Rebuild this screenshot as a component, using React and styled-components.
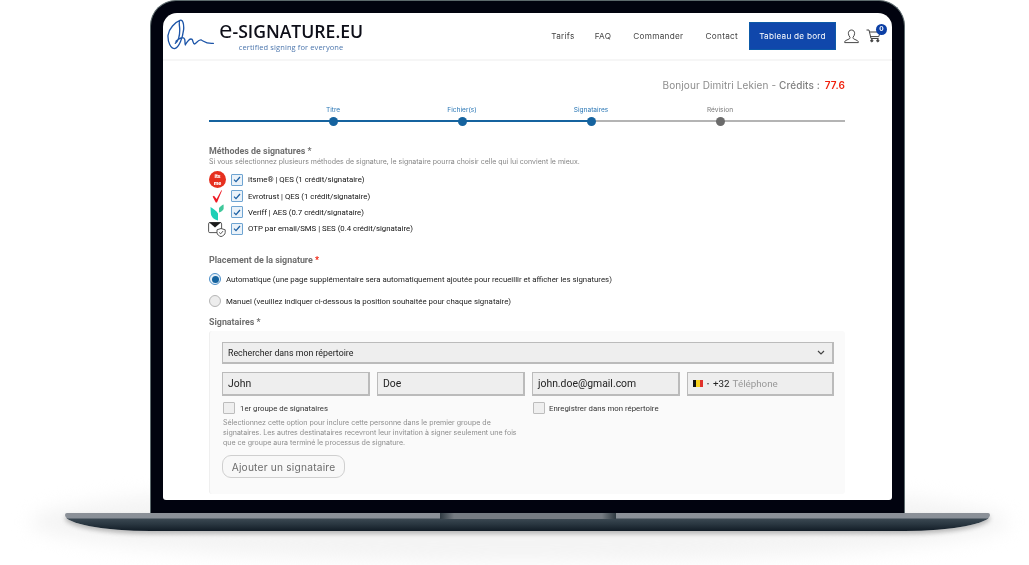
import React from 'react';
import styled, { createGlobalStyle } from 'styled-components';

const GlobalStyle = createGlobalStyle`
  html, body {
    margin: 0;
    padding: 0;
    background: #fff;
    overflow: hidden;
  }
  * {
    box-sizing: border-box;
  }
`;

const UI_FONT = `Inter, "Open Sans", sans-serif`;
const FORM_FONT = `Roboto, "Liberation Sans", sans-serif`;

const Page = styled.div`
  position: relative;
  width: 1029px;
  height: 565px;
  padding-left: 65px;
  overflow: hidden;
  background: #fff;

  &::before {
    content: '';
    position: absolute;
    left: 30px;
    right: 20px;
    top: 482px;
    height: 80px;
    border-radius: 50%;
    background: #f4f4f4;
    filter: blur(9px);
  }
`;

const Laptop = styled.div`
  position: relative;
  display: flex;
  flex-direction: column;
  align-items: center;
  width: 925px;
`;

const Lid = styled.div`
  width: 755px;
  height: 513px;
  padding: 12px 12px 13px;
  background: #01030f;
  border: 1px solid #5d6a6d;
  border-bottom: 0;
  border-radius: 26px 26px 0 0;
`;

const Screen = styled.div`
  display: flex;
  flex-direction: column;
  height: 100%;
  overflow: hidden;
  background: #fff;
  border-radius: 14px 14px 3px 3px;
  filter: blur(0.25px);
`;

const Base = styled.div`
  display: flex;
  justify-content: center;
  width: 925px;
  height: 18px;
  background: linear-gradient(to bottom, #8c9198 0, #8a9098 5px, #3a4751 6px, #2a3741 11px, #121c26 18px);
  border-radius: 2px 2px 90px 90px / 2px 2px 17px 17px;
  box-shadow: 0 3px 4px rgba(60, 60, 60, 0.32);
`;

const Notch = styled.div`
  width: 176px;
  height: 6px;
  background: linear-gradient(to right, #2f3a42, #757b82 8%, #757b82 92%, #2f3a42);
`;

const Header = styled.header`
  display: flex;
  align-items: center;
  justify-content: space-between;
  flex: none;
  height: 48px;
  padding: 0 11px 0 3px;
  border-bottom: 2px solid #f6f6f6;
`;

const Brand = styled.div`
  display: flex;
  align-items: center;
  gap: 5px;
`;

const BrandText = styled.div`
  display: flex;
  flex-direction: column;
  align-items: center;
  padding-bottom: 1px;
`;

const BrandName = styled.div`
  font-family: "Open Sans", sans-serif;
  font-size: 17.6px;
  line-height: 22px;
  font-weight: 600;
  color: #0d0e18;
  white-space: nowrap;

  span {
    font-size: 24px;
    line-height: 0;
    font-weight: 500;
  }
`;

const BrandTag = styled.div`
  font-family: "Open Sans", sans-serif;
  font-size: 7.5px;
  line-height: 10px;
  color: #4c76ad;
  letter-spacing: 0.1px;
`;

const Nav = styled.nav`
  display: flex;
  align-items: center;
`;

const NavLink = styled.a`
  margin-right: ${(p) => p.$gap}px;
  font-family: ${UI_FONT};
  font-size: 8.2px;
  font-weight: 400;
  color: #444;
  letter-spacing: 0.3px;
`;

const DashButton = styled.button`
  width: 87px;
  height: 28px;
  padding: 0;
  font-family: ${UI_FONT};
  font-size: 8.2px;
  font-weight: 400;
  letter-spacing: 0.25px;
  color: #fff;
  background: #1047ab;
  border: 1px solid #0d5aa8;
`;

const IconSlot = styled.div`
  position: relative;
  display: flex;
  margin-left: ${(p) => p.$left}px;
`;

const Badge = styled.span`
  position: absolute;
  top: -5px;
  right: -6px;
  width: 11px;
  height: 11px;
  border-radius: 50%;
  font-family: ${UI_FONT};
  font-size: 6.5px;
  font-weight: 700;
  line-height: 11px;
  text-align: center;
  color: #fff;
  background: #0c3fa5;
`;

const Main = styled.main`
  display: flex;
  flex-direction: column;
  flex: 1;
  min-height: 0;
  padding: 0 47px 6px 46px;
`;

const Greeting = styled.div`
  margin-top: 16px;
  font-family: ${UI_FONT};
  font-size: 10px;
  line-height: 16px;
  text-align: right;
  color: #8c8c8c;
  letter-spacing: 0.1px;

  b {
    font-weight: 500;
    color: #808080;
  }

  strong {
    margin-left: 2px;
    font-weight: 600;
    color: #f0200c;
  }
`;

const Stepper = styled.div`
  display: grid;
  grid-template-columns: repeat(4, 129px);
  height: 20px;
  margin-top: 13px;
  padding-left: 59.5px;
  background: linear-gradient(to right, #15639f 382px, #b4b4b4 382px) left 14px / 100% 2px no-repeat;
`;

const Step = styled.div`
  display: flex;
  flex-direction: column;
  align-items: center;
  font-family: ${UI_FONT};
  font-size: 6.6px;
  line-height: 9px;
  color: ${(p) => (p.$active ? '#2c78b6' : '#777')};
`;

const StepDot = styled.i`
  display: block;
  width: 9px;
  height: 9px;
  margin-top: 2px;
  border-radius: 50%;
  background: ${(p) => (p.$active ? '#15639f' : '#6b6b6b')};
`;

const SectionTitle = styled.div`
  margin-top: ${(p) => p.$top}px;
  font-family: ${FORM_FONT};
  font-size: 8.9px;
  line-height: 12px;
  font-weight: 700;
  color: #6e6e6e;

  em {
    font-style: normal;
    color: ${(p) => (p.$redStar ? '#f0200c' : '#6e6e6e')};
  }
`;

const Hint = styled.div`
  font-family: ${UI_FONT};
  font-size: 7px;
  line-height: 10px;
  color: #858585;
`;

const MethodList = styled.div`
  display: flex;
  flex-direction: column;
  margin-top: 5px;
`;

const MethodRow = styled.label`
  display: flex;
  align-items: center;
  height: 16.4px;
  font-family: ${FORM_FONT};
  font-size: 7.8px;
  color: #111;
`;

const MethodIcon = styled.span`
  display: flex;
  justify-content: center;
  width: 18px;
  margin-left: -1px;
  margin-right: 5px;
`;

const CheckBox = styled.span`
  display: flex;
  align-items: center;
  justify-content: center;
  flex: none;
  width: ${(p) => p.$size || 12}px;
  height: ${(p) => p.$size || 12}px;
  margin-right: ${(p) => p.$gap || 5}px;
  border: 1px solid ${(p) => (p.$checked ? '#6ea4d2' : '#bdbdbd')};
  border-radius: 1px;
  background: ${(p) => (p.$checked ? '#eaf2f9' : '#efefef')};
`;

const RadioRow = styled.label`
  display: flex;
  align-items: center;
  height: 12px;
  margin-top: ${(p) => p.$top}px;
  font-family: ${FORM_FONT};
  font-size: 7.85px;
  color: #1c1c1c;
`;

const Radio = styled.span`
  display: flex;
  align-items: center;
  justify-content: center;
  width: 12px;
  height: 12px;
  margin-right: 5px;
  border-radius: 50%;
  border: 1px solid ${(p) => (p.$on ? '#4e90c9' : '#b5b5b5')};
  background: ${(p) => (p.$on ? '#e8f1f8' : '#ededed')};

  &::after {
    content: '';
    display: ${(p) => (p.$on ? 'block' : 'none')};
    width: 7px;
    height: 7px;
    border-radius: 50%;
    background: #15639f;
  }
`;

const Panel = styled.section`
  flex: 1;
  margin-top: 3px;
  padding: 11px 11px 0 12px;
  background: #fafafa;
  border-left: 1px solid #efefef;
  border-radius: 3px;
`;

const SelectBox = styled.div`
  display: flex;
  align-items: center;
  justify-content: space-between;
  height: 22px;
  padding: 0 7px 0 5px;
  font-family: ${FORM_FONT};
  font-size: 8.8px;
  color: #222;
  background: #eee;
  border: 1px solid #bbb;
  border-width: 1px 2px 2px 1px;
`;

const FieldGrid = styled.div`
  display: grid;
  grid-template-columns: repeat(3, 148px) 147px;
  gap: 7px;
  margin-top: 8px;
`;

const Field = styled.div`
  display: flex;
  align-items: center;
  height: 24px;
  padding: 0 5px;
  font-family: ${FORM_FONT};
  font-size: ${(p) => p.$size || 10.4}px;
  color: #222;
  background: #eee;
  border: 1px solid #bbb;
  border-width: 1px 2px 2px 1px;
`;

const Flag = styled.span`
  display: flex;
  width: 10px;
  height: 7px;
  margin-right: 4px;
  background: linear-gradient(to right, #111 33%, #f7d21d 33% 66%, #e0312b 66%);
`;

const Caret = styled.span`
  margin-right: 4px;
  border-top: 2px solid #555;
  border-left: 1.5px solid transparent;
  border-right: 1.5px solid transparent;
`;

const PhoneHint = styled.span`
  margin-left: 3px;
  color: #999;
`;

const OptionGrid = styled.div`
  display: grid;
  grid-template-columns: 310px 1fr;
  margin-top: 6px;
`;

const OptionRow = styled.label`
  display: flex;
  align-items: center;
  align-self: start;
  padding-left: 1px;
  font-family: ${FORM_FONT};
  font-size: 7.8px;
  color: #333;
`;

const OptionHelp = styled.p`
  width: 300px;
  margin: 4px 0 0 1px;
  font-family: ${UI_FONT};
  font-size: 7.05px;
  line-height: 10px;
  color: #8d8d8d;
`;

const AddButton = styled.button`
  display: block;
  width: 123px;
  height: 23px;
  margin-top: 7px;
  padding: 0;
  font-family: ${UI_FONT};
  font-size: 10.2px;
  color: #6c6c6c;
  letter-spacing: 0.2px;
  background: #f8f8f8;
  border: 1px solid #cfcfcf;
  border-radius: 9px;
`;

const Signature = () => (
  <svg width="48" height="36" viewBox="4 8 144 108" fill="none">
    <path
      d="M46 15 C32 20 12 40 10 60 C9 80 18 100 30 100 C44 96 54 66 57 42 C58 24 54 12 46 15 C42 18 44 28 45 38 C46 58 42 76 32 84 M34 78 C44 68 56 62 60 72 C62 78 60 84 62 88 C68 78 76 68 82 72 C86 76 84 86 90 86 C96 82 102 72 110 74 C118 78 124 86 146 84"
      stroke="#1d55a8"
      strokeWidth="4"
      strokeLinecap="round"
    />
  </svg>
);

const UserIcon = () => (
  <svg width="15" height="15" viewBox="0 0 15 15" fill="none" stroke="#333" strokeWidth="0.9">
    <path d="M7.5 1 C5.3 1 4.2 2.7 4.4 4.7 C4.6 6.3 5.2 7.4 5.9 8.1 C6.2 8.9 6 9.5 5 10 L1.6 11.6 C0.8 12 0.7 12.8 0.7 13.6 H14.3 C14.3 12.8 14.2 12 13.4 11.6 L10 10 C9 9.5 8.8 8.9 9.1 8.1 C9.8 7.4 10.4 6.3 10.6 4.7 C10.8 2.7 9.7 1 7.5 1 Z" />
  </svg>
);

const CartIcon = () => (
  <svg width="15" height="14" viewBox="0 0 15 14" fill="none" stroke="#444" strokeWidth="1">
    <path d="M0.5 1 H3 L5 9.5 H12.6 M3.5 3 H14 L12.8 7.6 H4.6" />
    <circle cx="5.8" cy="11.7" r="1.1" fill="#444" />
    <circle cx="11.8" cy="11.7" r="1.1" fill="#444" />
  </svg>
);

const Chevron = () => (
  <svg width="8" height="5" viewBox="0 0 8 5" fill="none" stroke="#444" strokeWidth="1.2">
    <path d="M1 1 L4 4 L7 1" />
  </svg>
);

const Tick = () => (
  <svg width="8" height="7" viewBox="0 0 8 7" fill="none" stroke="#1b5fa3" strokeWidth="1.3">
    <path d="M1 3.6 L3 5.6 L7 1" />
  </svg>
);

const ItsmeLogo = () => (
  <svg width="17" height="17" viewBox="0 0 17 17">
    <circle cx="8.5" cy="8.5" r="8.5" fill="#e6301f" />
    <text x="8.5" y="7.2" fontSize="5.4" fontWeight="900" fontFamily="Roboto, sans-serif" fill="#fff" textAnchor="middle">its</text>
    <text x="8.5" y="13.8" fontSize="5.4" fontWeight="900" fontFamily="Roboto, sans-serif" fill="#fff" textAnchor="middle">me</text>
  </svg>
);

const EvrotrustLogo = () => (
  <svg width="14" height="16" viewBox="0 0 14 16">
    <path d="M2.6 8.6 L4 7.8 L6.6 11 L11.4 2.2 L12 2.6 L7 14.6 L5.8 14.6 Z" fill="#ee1c25" />
  </svg>
);

const VeriffLogo = () => (
  <svg width="14" height="17" viewBox="0 0 14 17">
    <path d="M0.5 3 C3 5 6 6 8 9.5 L8 16.5 C4 15.5 1 13 0.8 9 Z" fill="#1fcfb6" />
    <path d="M9 8.5 L9 4 C10 2.5 12 1 13.6 0.5 L13.6 5 C12.6 6.8 11 8 9 8.5 Z" fill="#3fc79a" />
  </svg>
);

const OtpLogo = () => (
  <svg width="18" height="16" viewBox="0 0 18 16" fill="none">
    <rect x="0.6" y="1.6" width="13" height="10" rx="1.2" stroke="#444" strokeWidth="0.9" />
    <path d="M1 1.2 H13.2 L7 6.4 Z" fill="#1b1b1b" />
    <path d="M13 7.5 L17.2 8.8 V11.6 C17.2 13.6 15 15 13 15.6 C11 15 9 13.6 9 11.6 V8.8 Z" fill="#fff" stroke="#444" strokeWidth="0.9" />
    <path d="M11.2 11.4 L12.7 12.8 L15 10.1" stroke="#444" strokeWidth="0.9" />
  </svg>
);

const methods = [
  { logo: <ItsmeLogo />, label: 'itsme® | QES (1 crédit/signataire)' },
  { logo: <EvrotrustLogo />, label: 'Evrotrust | QES (1 crédit/signataire)' },
  { logo: <VeriffLogo />, label: 'Veriff | AES (0.7 crédit/signataire)' },
  { logo: <OtpLogo />, label: 'OTP par email/SMS | SES (0.4 crédit/signataire)' },
];

const steps = [
  { label: 'Titre', active: true },
  { label: 'Fichier(s)', active: true },
  { label: 'Signataires', active: true },
  { label: 'Révision', active: false },
];

export default function App() {
  return (
    <>
      <GlobalStyle />
      <Page>
        <Laptop>
          <Lid>
            <Screen>
              <Header>
                <Brand>
                  <Signature />
                  <BrandText>
                    <BrandName><span>e</span>-SIGNATURE.EU</BrandName>
                    <BrandTag>certified signing for everyone</BrandTag>
                  </BrandText>
                </Brand>
                <Nav>
                  <NavLink $gap={20}>Tarifs</NavLink>
                  <NavLink $gap={22}>FAQ</NavLink>
                  <NavLink $gap={22}>Commander</NavLink>
                  <NavLink $gap={11}>Contact</NavLink>
                  <DashButton>Tableau de bord</DashButton>
                  <IconSlot $left={8}><UserIcon /></IconSlot>
                  <IconSlot $left={7}>
                    <CartIcon />
                    <Badge>0</Badge>
                  </IconSlot>
                </Nav>
              </Header>
              <Main>
                <Greeting>
                  Bonjour Dimitri Lekien - <b>Crédits :</b> <strong>77.6</strong>
                </Greeting>
                <Stepper>
                  {steps.map((s) => (
                    <Step key={s.label} $active={s.active}>
                      {s.label}
                      <StepDot $active={s.active} />
                    </Step>
                  ))}
                </Stepper>
                <SectionTitle $top={18.5}>Méthodes de signatures <em>*</em></SectionTitle>
                <Hint>Si vous sélectionnez plusieurs méthodes de signature, le signataire pourra choisir celle qui lui convient le mieux.</Hint>
                <MethodList>
                  {methods.map((m) => (
                    <MethodRow key={m.label}>
                      <MethodIcon>{m.logo}</MethodIcon>
                      <CheckBox $checked><Tick /></CheckBox>
                      {m.label}
                    </MethodRow>
                  ))}
                </MethodList>
                <SectionTitle $top={17} $redStar>Placement de la signature <em>*</em></SectionTitle>
                <RadioRow $top={7}>
                  <Radio $on />
                  Automatique (une page supplémentaire sera automatiquement ajoutée pour recueillir et afficher les signatures)
                </RadioRow>
                <RadioRow $top={10}>
                  <Radio />
                  Manuel (veuillez indiquer ci-dessous la position souhaitée pour chaque signataire)
                </RadioRow>
                <SectionTitle $top={9}>Signataires <em>*</em></SectionTitle>
                <Panel>
                  <SelectBox>
                    Rechercher dans mon répertoire
                    <Chevron />
                  </SelectBox>
                  <FieldGrid>
                    <Field>John</Field>
                    <Field>Doe</Field>
                    <Field>john.doe@gmail.com</Field>
                    <Field $size={9.8}>
                      <Flag />
                      <Caret />
                      +32
                      <PhoneHint>Téléphone</PhoneHint>
                    </Field>
                  </FieldGrid>
                  <OptionGrid>
                    <div>
                      <OptionRow>
                        <CheckBox $size={12} $gap={5} />
                        1er groupe de signataires
                      </OptionRow>
                      <OptionHelp>
                        Sélectionnez cette option pour inclure cette personne dans le premier groupe de signataires. Les autres destinataires recevront leur invitation à signer seulement une fois que ce groupe aura terminé le processus de signature.
                      </OptionHelp>
                    </div>
                    <OptionRow>
                      <CheckBox $size={12} $gap={4} />
                      Enregistrer dans mon répertoire
                    </OptionRow>
                  </OptionGrid>
                  <AddButton>Ajouter un signataire</AddButton>
                </Panel>
              </Main>
            </Screen>
          </Lid>
          <Base>
            <Notch />
          </Base>
        </Laptop>
      </Page>
    </>
  );
}
